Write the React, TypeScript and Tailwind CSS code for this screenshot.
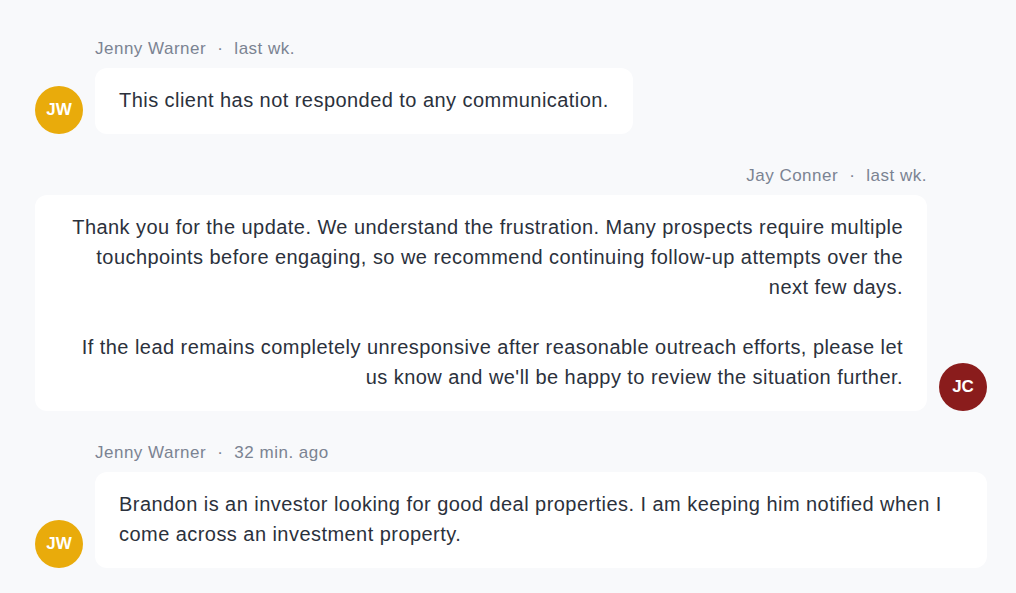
const messages = [
  {
    id: 1,
    author: 'Jenny Warner',
    initials: 'JW',
    time: 'last wk.',
    mine: false,
    paragraphs: ['This client has not responded to any communication.'],
  },
  {
    id: 2,
    author: 'Jay Conner',
    initials: 'JC',
    time: 'last wk.',
    mine: true,
    paragraphs: [
      'Thank you for the update. We understand the frustration. Many prospects require multiple touchpoints before engaging, so we recommend continuing follow-up attempts over the next few days.',
      "If the lead remains completely unresponsive after reasonable outreach efforts, please let us know and we'll be happy to review the situation further.",
    ],
  },
  {
    id: 3,
    author: 'Jenny Warner',
    initials: 'JW',
    time: '32 min. ago',
    mine: false,
    paragraphs: [
      'Brandon is an investor looking for good deal properties. I am keeping him notified when I come across an investment property.',
    ],
  },
]

function Avatar({ initials, mine }: { initials: string; mine: boolean }) {
  return (
    <div
      className={`w-12 h-12 shrink-0 rounded-full flex items-center justify-center text-white text-[17px] font-bold ${mine ? 'bg-[#8a1c1c]' : 'bg-[#e9ab0b]'}`}
    >
      {initials}
    </div>
  )
}

export default function App() {
  return (
    <div className="min-h-screen bg-[#f8f9fb] font-['Liberation_Sans',Arial,sans-serif]">
      <div className="pl-[35px] pr-[29px] pt-[37px] flex flex-col gap-[30px]">
        {messages.map((m) => (
          <div key={m.id} className={`flex flex-col ${m.mine ? 'items-end' : 'items-start'}`}>
            <div
              className={`text-[17px] leading-6 tracking-[0.5px] text-[#7b8392] flex gap-[11px] ${m.mine ? 'pr-[60px]' : 'pl-[60px]'}`}
            >
              <span>{m.author}</span>
              <span>·</span>
              <span>{m.time}</span>
            </div>
            <div className={`mt-[7px] flex items-end gap-3 w-full ${m.mine ? 'flex-row-reverse' : ''}`}>
              <Avatar initials={m.initials} mine={m.mine} />
              <div
                className={`bg-white rounded-xl px-6 pt-[17px] pb-[19px] text-[20px] leading-[30px] tracking-[0.45px] text-[#2b313c] ${m.mine ? 'text-right' : 'text-left'}`}
              >
                {m.paragraphs.map((p, i) => (
                  <p key={i} className={i > 0 ? 'mt-[30px]' : ''}>
                    {p}
                  </p>
                ))}
              </div>
            </div>
          </div>
        ))}
      </div>
    </div>
  )
}
